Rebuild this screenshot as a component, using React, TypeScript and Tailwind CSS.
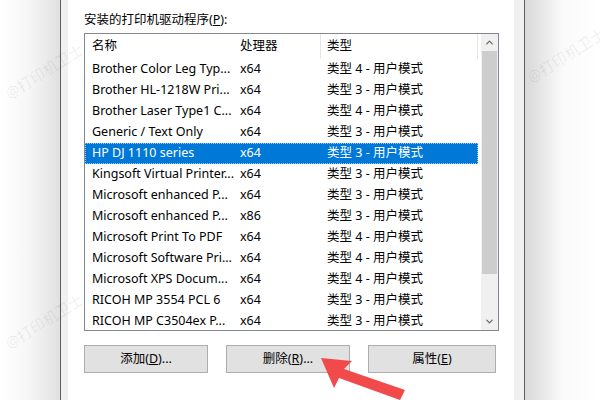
import { ChevronDown, ChevronUp } from "lucide-react";

const drivers = [
  ["Brother Color Leg Typ...", "x64", "类型 4 - 用户模式"],
  ["Brother HL-1218W Pri...", "x64", "类型 3 - 用户模式"],
  ["Brother Laser Type1 C...", "x64", "类型 4 - 用户模式"],
  ["Generic / Text Only", "x64", "类型 3 - 用户模式"],
  ["HP DJ 1110 series", "x64", "类型 3 - 用户模式"],
  ["Kingsoft Virtual Printer...", "x64", "类型 3 - 用户模式"],
  ["Microsoft enhanced P...", "x64", "类型 3 - 用户模式"],
  ["Microsoft enhanced P...", "x86", "类型 3 - 用户模式"],
  ["Microsoft Print To PDF", "x64", "类型 4 - 用户模式"],
  ["Microsoft Software Pri...", "x64", "类型 4 - 用户模式"],
  ["Microsoft XPS Docum...", "x64", "类型 4 - 用户模式"],
  ["RICOH MP 3554 PCL 6", "x64", "类型 3 - 用户模式"],
  ["RICOH MP C3504ex P...", "x64", "类型 3 - 用户模式"],
];

// faint diagonal watermark text in the margins
const marks = [
  [0, 60],
  [522, 44],
  [0, 310],
];

const Btn = ({ label, k, rest }: { label: string; k: string; rest: string }) => (
  <button className="h-[28px] w-[124px] border border-[#adadad] bg-[#e1e1e1] text-[12.5px] text-black">
    {label}(<span className="underline">{k}</span>){rest}
  </button>
);

const App = () => {
  return (
    <div
      className="relative flex h-[400px] w-[600px] overflow-hidden bg-white text-black"
      style={{ fontFamily: '"Noto Sans", "Noto Sans CJK SC", sans-serif' }}
    >
      {/* left backdrop */}
      <div className="h-full w-[60px] bg-gradient-to-r from-white via-[#f6f6f6] to-[#e0e0e0]"></div>

      {/* dialog */}
      <div className="flex h-full w-[465px] border-x border-[#5e5e5e] bg-[#f0f0f0] pl-[7px] pr-[10px]">
        <div className="flex h-full flex-1 flex-col bg-white pl-[16px] pr-[15px]">
          <div className="pt-[11px] text-[12.5px] leading-[18px]">
            安装的打印机驱动程序(<span className="underline">P</span>):
          </div>

          <div className="mt-[4px] flex h-[298px] border border-[#828790] text-[12.5px]">
            <div className="flex flex-1 flex-col overflow-hidden">
              <div className="flex h-[25px] shrink-0 items-center">
                <div className="w-[149px] pl-[7px]">名称</div>
                <div className="w-[86px] pl-[6px]">处理器</div>
                <div className="flex h-full w-[158px] items-center border-x border-[#e5e5e5] pl-[6px]">类型</div>
              </div>
              {drivers.map(([name, cpu, type], i) => {
                const sel = i === 4;
                return (
                  <div
                    key={i}
                    className={
                      sel
                        ? "flex h-[21px] w-[393px] shrink-0 items-center border border-dotted border-[#9cc8f0] bg-[#0078d7] text-white"
                        : "flex h-[21px] w-[393px] shrink-0 items-center border border-transparent"
                    }
                  >
                    <div className="w-[148px] whitespace-nowrap pl-[6px]">{name}</div>
                    <div className="w-[86px] pl-[6px]">{cpu}</div>
                    <div className="whitespace-nowrap pl-[7px]">{type}</div>
                  </div>
                );
              })}
            </div>

            {/* scrollbar */}
            <div className="flex w-[17px] flex-col bg-[#f0f0f0]">
              <div className="flex h-[17px] items-center justify-center text-[#606060]">
                <ChevronUp size={11} strokeWidth={2.5} />
              </div>
              <div className="mx-[1px] h-[223px] bg-[#cdcdcd]"></div>
              <div className="flex-1"></div>
              <div className="flex h-[17px] items-center justify-center text-[#606060]">
                <ChevronDown size={11} strokeWidth={2.5} />
              </div>
            </div>
          </div>

          <div className="mt-[14px] flex gap-[18px]">
            <Btn label="添加" k="D" rest="..." />
            <Btn label="删除" k="R" rest="..." />
            <button className="h-[28px] w-[128px] border border-[#adadad] bg-[#e1e1e1] text-[12.5px]">
              属性(<span className="underline">E</span>)
            </button>
          </div>
        </div>
      </div>

      {/* right backdrop */}
      <div className="h-full flex-1 bg-gradient-to-r from-[#d8d8d8] via-[#fafafa] to-white"></div>

      {/* watermarks */}
      {marks.map(([x, y], i) => (
        <div
          key={i}
          className="pointer-events-none absolute -rotate-[32deg] whitespace-nowrap text-[15px] text-black/[0.07]"
          style={{ left: x, top: y }}
        >
          @打印机卫士
        </div>
      ))}

      {/* red arrow */}
      <svg className="pointer-events-none absolute left-[316px] top-[352px]" width="95" height="48" viewBox="316 352 95 48">
        <polygon
          points="321,358 352,361 344,369 405,390 400,400 339,378 334,388"
          fill="#f24a4a"
        />
      </svg>
    </div>
  );
};

export default App;
